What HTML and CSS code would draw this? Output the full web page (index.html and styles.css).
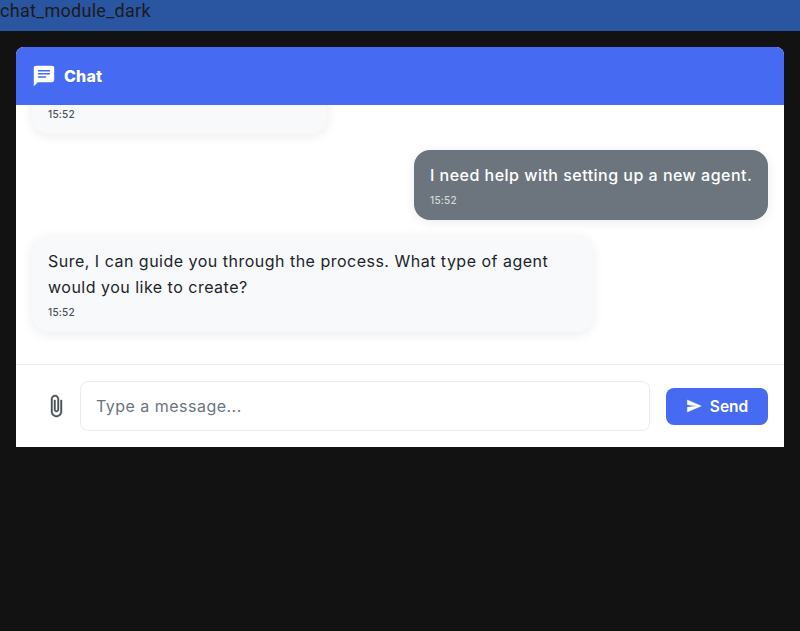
FILE: index.html
```html
<!DOCTYPE html>
<html lang="en">
<head>
<meta charset="utf-8">
<title>chat_module_dark</title>
<link rel="stylesheet" href="styles.css">
</head>
<body>
<div class="topbar">chat_module_dark</div>
<main class="chat">
  <header class="chat-header">
    <svg class="icon-chat" viewBox="0 0 24 24"><path fill="currentColor" d="M20 1.700H4c-1.200 0-2.200.9-2.200 2.100v18.400l4-4H20c1.200 0 2.200-.9 2.200-2.100V3.800c0-1.200-1-2.100-2.200-2.100zM6.500 6h11a.75.75 0 0 1 0 1.500h-11a.75.75 0 0 1 0-1.500zM6.500 9.100h11a.75.75 0 0 1 0 1.500h-11a.75.75 0 0 1 0-1.500zM6.500 12.200h7a.75.75 0 0 1 0 1.500h-7a.75.75 0 0 1 0-1.500z"/></svg>
    <h1>Chat</h1>
  </header>
  <section class="messages">
    <div class="message bot first"><time>15:52</time></div>
    <div class="message user"><p>I need help with setting up a new agent.</p><time>15:52</time></div>
    <div class="message bot last"><p>Sure, I can guide you through the process. What type of agent would you like to create?</p><time>15:52</time></div>
  </section>
  <form class="composer">
    <button class="attach" type="button" aria-label="Attach"><svg viewBox="0 0 24 24"><path fill="currentColor" stroke="currentColor" stroke-width=".4" d="M16.500 6v11.500c0 2.210-1.790 4-4 4s-4-1.790-4-4V5c0-1.380 1.120-2.500 2.500-2.500s2.500 1.120 2.500 2.500v10.500c0 .55-.45 1-1 1s-1-.45-1-1V6H10v9.500c0 1.380 1.120 2.500 2.500 2.500s2.500-1.120 2.500-2.500V5c0-2.210-1.790-4-4-4S7 2.790 7 5v12.500c0 3.040 2.460 5.500 5.500 5.500s5.500-2.460 5.500-5.500V6h-1.500z"/></svg></button>
    <input class="field" type="text" placeholder="Type a message...">
    <button class="send" type="button"><svg viewBox="0 0 24 24"><path fill="currentColor" stroke="currentColor" stroke-width=".6" d="M2.010 21L23 12 2.010 3 2 10l15 2-15 2z"/></svg><span>Send</span></button>
  </form>
</main>
</body>
</html>
```
FILE: styles.css
```css
* { box-sizing: border-box; }
body { margin: 0; background: #121212; font-family: Inter, "Liberation Sans", sans-serif; overflow: hidden; }
.topbar { height: 31px; background: #2a55a1; color: #1b1b1d; font: 18px/22px Roboto, sans-serif; letter-spacing: 0.27px; }
.chat { display: flex; flex-direction: column; height: 400px; margin: 16px; background: #fff; border-radius: 8px 8px 0 0; overflow: hidden; }
.chat-header { display: flex; align-items: center; gap: 8px; flex: 0 0 58px; padding: 0 16px; background: #466bf2; color: #fff; }
.icon-chat { width: 24px; height: 24px; }
h1 { margin: 0; font-size: 16px; font-weight: 800; line-height: 24px; letter-spacing: 0.2px; }
.messages { display: flex; flex-direction: column; justify-content: flex-end; gap: 16px; flex: 1; min-height: 0; padding: 0 16px 32px; overflow: hidden; }
.message { flex: none; padding: 12px 16px; border-radius: 16px; box-shadow: 0 2px 12px rgba(0, 0, 0, 0.08); font-size: 16px; line-height: 26px; letter-spacing: 0.49px; }
.message p { margin: 0; }
.message time { display: block; margin-top: 4px; font-size: 10px; font-weight: 500; line-height: 16px; letter-spacing: 0.25px; }
.bot { align-self: flex-start; background: #f8f9fb; color: #212529; }
.bot time { color: #495057; }
.user { align-self: flex-end; width: 354px; background: #6c757d; color: #fff; font-weight: 500; letter-spacing: 0.48px; white-space: nowrap; }
.user time { color: #d5d8da; }
.first { width: 294.5px; height: 96px; display: flex; align-items: flex-end; }
.last { width: 560.5px; }
.composer { display: flex; align-items: center; flex: 0 0 83px; padding: 0 16px; border-top: 1px solid #e9ecef; }
button { display: flex; align-items: center; border: 0; background: none; font-family: inherit; }
.attach { width: 48px; padding: 0 0 0 12px; color: #495057; }
.attach svg { width: 24px; height: 24px; }
.field { flex: 1; min-width: 0; height: 50px; padding: 0 15px; border: 1px solid #e9ecef; border-radius: 8px; background: #fff; font: 16px/24px Inter, sans-serif; letter-spacing: 0.48px; }
.field::placeholder { color: #6c757d; opacity: 1; }
.send { justify-content: center; gap: 8px; width: 102px; height: 37px; margin-left: 16px; padding: 0; border-radius: 8px; background: #466bf2; color: #fff; font-size: 15.5px; font-weight: 600; }
.send svg { width: 16px; height: 16px; }
```
